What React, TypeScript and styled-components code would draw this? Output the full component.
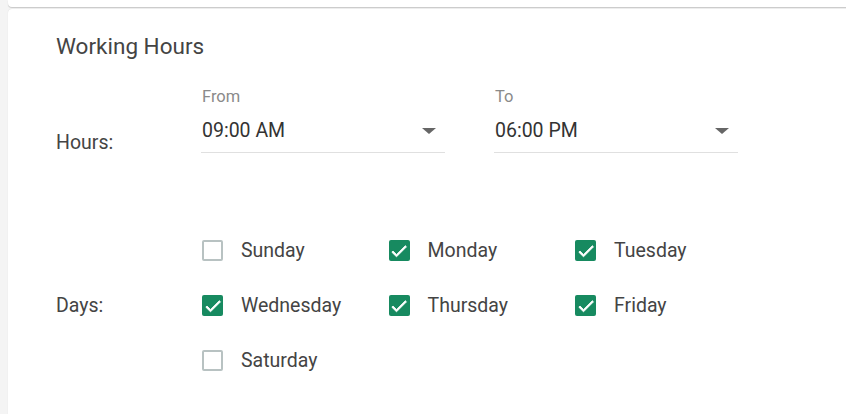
import React from "react";
import styled, { createGlobalStyle } from "styled-components";

const GlobalStyle = createGlobalStyle`
  html, body {
    margin: 0;
    padding: 0;
    background: #f4f4f4;
    overflow: hidden;
    font-family: Roboto, "Liberation Sans", Arial, sans-serif;
  }
  * { box-sizing: border-box; }
`;

const Page = styled.div`
  padding-left: 8px;
  display: flex;
  flex-direction: column;
  gap: 2px;
  height: 414px;
`;

const TopCard = styled.div`
  height: 7px;
  margin-right: -20px;
  background: #fff;
  border-radius: 0 0 4px 4px;
  box-shadow: 0 1px 1px rgba(0, 0, 0, 0.18);
`;

const Card = styled.section`
  flex: 1;
  margin-right: -20px;
  background: #fff;
  border-radius: 4px 4px 0 0;
  box-shadow: 0 0 1px rgba(0, 0, 0, 0.15);
  padding: 23px 0 0 48px;
`;

const Title = styled.h2`
  margin: 0 0 28px;
  font-size: 22.5px;
  line-height: 28px;
  font-weight: 400;
  color: #444;
`;

const FormRow = styled.div<{ $align: "end" | "center" }>`
  display: grid;
  grid-template-columns: 145px 1fr;
  align-items: ${(p) => p.$align};
`;

const RowLabel = styled.div<{ $shift?: number }>`
  font-size: 19.5px;
  line-height: 22px;
  color: #444;
  margin-bottom: ${(p) => -(p.$shift ?? 0)}px;
`;

const Fields = styled.div`
  display: flex;
  gap: 49px;
`;

const Field = styled.div`
  width: 244px;
  display: flex;
  flex-direction: column;
`;

const FieldLabel = styled.label`
  padding-left: 1px;
  font-size: 16.5px;
  line-height: 18px;
  color: #8a8a8a;
`;

const SelectBox = styled.div`
  display: flex;
  align-items: center;
  justify-content: space-between;
  padding: 13px 9px 10px 1px;
  border-bottom: 1px solid #e0e0e0;
  font-size: 19.5px;
  line-height: 23px;
  color: #333;
`;

const Caret = styled.span`
  width: 0;
  height: 0;
  border-left: 7px solid transparent;
  border-right: 7px solid transparent;
  border-top: 6px solid #666;
`;

const Spacer = styled.div`
  height: 70px;
`;

const DaysGrid = styled.div`
  display: grid;
  grid-template-columns: repeat(3, 186.5px);
  grid-auto-rows: 55px;
`;

const Day = styled.label`
  display: flex;
  align-items: center;
  gap: 18px;
  font-size: 19.5px;
  color: #444;
  cursor: pointer;
`;

const Box = styled.span<{ $checked: boolean }>`
  flex: none;
  width: 21px;
  height: 21px;
  margin-left: 1px;
  border-radius: 2px;
  display: flex;
  align-items: center;
  justify-content: center;
  background: ${(p) => (p.$checked ? "#178a60" : "#fff")};
  border: ${(p) => (p.$checked ? "0" : "2px solid #b8c2c2")};
`;

const Check = styled.svg`
  flex: none;
  display: block;
  width: 20px;
  height: 20px;
`;

const days: [string, boolean][] = [
  ["Sunday", false],
  ["Monday", true],
  ["Tuesday", true],
  ["Wednesday", true],
  ["Thursday", true],
  ["Friday", true],
  ["Saturday", false],
];

export default function App() {
  return (
    <>
      <GlobalStyle />
      <Page>
        <TopCard />
        <Card>
          <Title>Working Hours</Title>
          <FormRow $align="end">
            <RowLabel $shift={1}>Hours:</RowLabel>
            <Fields>
              <Field>
                <FieldLabel>From</FieldLabel>
                <SelectBox>
                  <span>09:00 AM</span>
                  <Caret />
                </SelectBox>
              </Field>
              <Field>
                <FieldLabel>To</FieldLabel>
                <SelectBox>
                  <span>06:00 PM</span>
                  <Caret />
                </SelectBox>
              </Field>
            </Fields>
          </FormRow>
          <Spacer />
          <FormRow $align="center">
            <RowLabel>Days:</RowLabel>
            <DaysGrid>
              {days.map(([name, checked]) => (
                <Day key={name}>
                  <Box $checked={checked}>
                    {checked && (
                      <Check viewBox="0 0 24 24">
                        <path
                          d="M9 16.17L4.83 12l-1.42 1.41L9 19 21 7l-1.41-1.41z"
                          fill="#fff"
                          stroke="#fff"
                          strokeWidth="1"
                          strokeLinejoin="round"
                        />
                      </Check>
                    )}
                  </Box>
                  {name}
                </Day>
              ))}
            </DaysGrid>
          </FormRow>
        </Card>
      </Page>
    </>
  );
}
